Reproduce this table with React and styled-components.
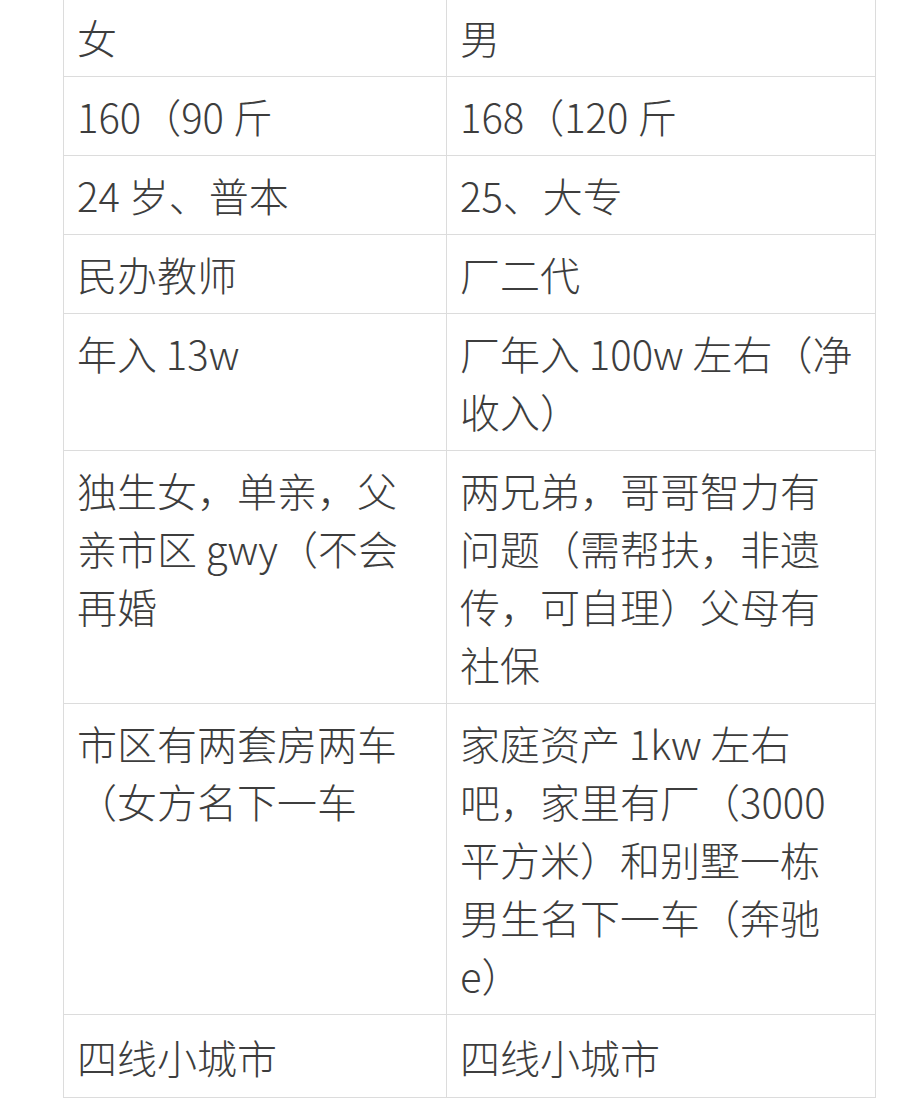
import React from 'react';
import styled, { createGlobalStyle } from 'styled-components';

const GlobalStyle = createGlobalStyle`
  html, body {
    margin: 0;
    padding: 0;
    background: #fff;
  }
  body {
    font-family: "Noto Sans CJK SC", "Noto Sans", sans-serif;
    color: #3a3a3a;
  }
`;

const rows = [
  { left: ['女'], right: ['男'] },
  { left: ['160（90 斤'], right: ['168（120 斤'] },
  { left: ['24 岁、普本'], right: ['25、大专'] },
  { left: ['民办教师'], right: ['厂二代'] },
  { left: ['年入 13w'], right: ['厂年入 100w 左右（净', '收入）'] },
  {
    left: ['独生女，单亲，父', '亲市区 gwy（不会', '再婚'],
    right: ['两兄弟，哥哥智力有', '问题（需帮扶，非遗', '传，可自理）父母有', '社保'],
  },
  {
    left: ['市区有两套房两车', '（女方名下一车'],
    right: ['家庭资产 1kw 左右', '吧，家里有厂（3000', '平方米）和别墅一栋', '男生名下一车（奔驰', 'e）'],
  },
  { left: ['四线小城市'], right: ['四线小城市'], tall: true },
];

function Lines({ lines }) {
  return lines.map((line, i) => <Line key={i}>{line}</Line>);
}

function App() {
  return (
    <Page>
      <GlobalStyle />
      <Table>
        <colgroup>
          <col style={{ width: 383 }} />
          <col style={{ width: 429 }} />
        </colgroup>
        <tbody>
          {rows.map((row, i) => (
            <tr key={i}>
              <Cell $tall={row.tall}>
                <Lines lines={row.left} />
              </Cell>
              <Cell $tall={row.tall}>
                <Lines lines={row.right} />
              </Cell>
            </tr>
          ))}
        </tbody>
      </Table>
    </Page>
  );
}

const Page = styled.div`
  width: 916px;
  height: 1101px;
  overflow: hidden;
  padding-left: 63px;
  box-sizing: border-box;
`;

const Table = styled.table`
  border-collapse: collapse;
  table-layout: fixed;
  width: 812px;
  margin-top: -3px;
`;

const Cell = styled.td`
  border: 1px solid #dcdcdc;
  padding: ${(p) => (p.$tall ? '13px 13px 11px' : '10px 13px')};
  vertical-align: top;
  font-size: 40px;
  font-weight: 300;
  line-height: 58px;
  color: #3d3d3d;
`;

const Line = styled.div`
  white-space: nowrap;
`;

export default App;
